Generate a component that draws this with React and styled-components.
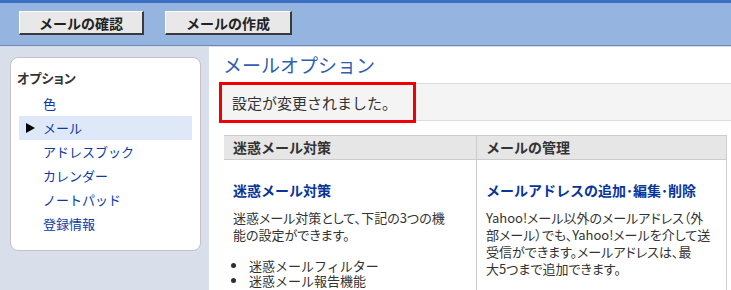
import React from 'react';
import styled, { createGlobalStyle } from 'styled-components';

const GlobalStyle = createGlobalStyle`
  html, body {
    margin: 0;
    padding: 0;
    background: #ffffff;
  }
  body {
    font-family: "Noto Sans CJK JP", "Liberation Sans", sans-serif;
    color: #333333;
  }
`;

const Page = styled.div`
  width: 731px;
  height: 290px;
  overflow: hidden;
  display: flex;
  flex-direction: column;
`;

const TopBar = styled.div`
  flex-shrink: 0;
  box-sizing: border-box;
  height: 46px;
  background: #96b4e0;
  border-top: 3px solid #3b6fc6;
  border-bottom: 1px solid #6d8ab6;
  padding: 8px 0 0 19px;
  display: flex;
  gap: 21px;
  align-items: flex-start;
`;

const BarButton = styled.button`
  box-sizing: border-box;
  width: ${p => p.w}px;
  height: 24px;
  padding: 0;
  background: #e8e8e8;
  border-top: 1px solid #ffffff;
  border-left: 1px solid #ffffff;
  border-right: 2px solid #3a3a3a;
  border-bottom: 2px solid #3a3a3a;
  font-family: "Noto Sans CJK JP", sans-serif;
  font-size: 14px;
  font-weight: 700;
  line-height: 20px;
  color: #222222;
`;

const Body = styled.div`
  flex: 1;
  min-height: 0;
  display: flex;
  border-top: 1px solid #d4dcea;
`;

const Sidebar = styled.div`
  width: 209px;
  flex-shrink: 0;
  background: #d8dfeb;
  padding: 10px 0 0 10px;
  box-sizing: border-box;
`;

const SidePanel = styled.div`
  box-sizing: border-box;
  width: 191px;
  height: 194px;
  background: #ffffff;
  border: 1px solid #c2c2c2;
  border-radius: 8px;
  padding: 12px 8px 0 8px;
`;

const SideTitle = styled.div`
  font-size: 13px;
  font-weight: 700;
  line-height: 16px;
  color: #333333;
  margin: 0 0 6px -2px;
  font-feature-settings: "palt";
`;

const SideList = styled.ul`
  list-style: none;
  margin: 0;
  padding: 0;
`;

const SideItem = styled.li`
  position: relative;
  height: 24px;
  line-height: 24px;
  padding-left: 24px;
  font-size: 13px;
  color: #0b3aa4;
  background: ${p => (p.active ? '#dfe8f8' : 'transparent')};
`;

const Arrow = styled.span`
  position: absolute;
  left: 7px;
  top: 7px;
  width: 0;
  height: 0;
  border-top: 5px solid transparent;
  border-bottom: 5px solid transparent;
  border-left: 9px solid #000000;
`;

const Main = styled.div`
  flex: 1;
  padding: 0 4px 0 10px;
  box-sizing: border-box;
`;

const Title = styled.h1`
  margin: 6px 0 0 4px;
  font-size: 19px;
  font-weight: 400;
  line-height: 24px;
  color: #2f60b0;
`;

const Notice = styled.div`
  box-sizing: border-box;
  margin-top: 6px;
  margin-right: -4px;
  height: 38px;
  background: #f4f4f4;
  border-top: 1px solid #dddddd;
  border-bottom: 1px solid #dddddd;
  display: flex;
  align-items: flex-start;
`;

const NoticeBox = styled.div`
  box-sizing: border-box;
  margin-top: -2px;
  width: 197px;
  height: 41px;
  border: 3px solid #f00000;
  padding-left: 10px;
  font-size: 15px;
  line-height: 35px;
  color: #333333;
`;

const Table = styled.div`
  margin: 14px 0 0 5px;
  width: 503px;
  display: grid;
  grid-template-columns: 253px 250px;
  border-top: 1px solid #cccccc;
`;

const Column = styled.div`
  box-sizing: border-box;
  border-right: 1px solid #cccccc;
`;

const HeadCell = styled.div`
  height: 23px;
  line-height: 23px;
  background: #e6e6e6;
  border-bottom: 1px solid #cccccc;
  padding-left: 9px;
  font-size: 14px;
  font-weight: 700;
  color: #333333;
`;

const Cell = styled.div`
  padding: 20px 9px 0 9px;
  height: 140px;
`;

const CellHeading = styled.a`
  display: block;
  font-size: 14px;
  font-weight: 700;
  line-height: 20px;
  color: #0a3598;
  text-decoration: none;
  margin-bottom: 9px;
  white-space: nowrap;
`;

const Text = styled.p`
  margin: 0;
  font-size: 13px;
  line-height: 17px;
  color: #333333;
  white-space: nowrap;
  font-feature-settings: "palt";
`;

const Bullets = styled.ul`
  list-style: none;
  margin: 15px 0 0 -2px;
  padding: 0;
`;

const Bullet = styled.li`
  position: relative;
  padding-left: 18px;
  font-size: 13px;
  line-height: 15px;
  color: #333333;

  &::before {
    content: '';
    position: absolute;
    left: 0;
    top: 5px;
    width: 5px;
    height: 5px;
    border-radius: 50%;
    background: #3a2a2e;
  }
`;

const menu = ['色', 'メール', 'アドレスブック', 'カレンダー', 'ノートパッド', '登録情報'];

export default function App() {
  return (
    <Page>
      <GlobalStyle />
      <TopBar>
        <BarButton w={125}>メールの確認</BarButton>
        <BarButton w={127}>メールの作成</BarButton>
      </TopBar>
      <Body>
        <Sidebar>
          <SidePanel>
            <SideTitle>オプション</SideTitle>
            <SideList>
              {menu.map(item => (
                <SideItem key={item} active={item === 'メール'}>
                  {item === 'メール' && <Arrow />}
                  {item}
                </SideItem>
              ))}
            </SideList>
          </SidePanel>
        </Sidebar>
        <Main>
          <Title>メールオプション</Title>
          <Notice>
            <NoticeBox>設定が変更されました。</NoticeBox>
          </Notice>
          <Table>
            <Column>
              <HeadCell>迷惑メール対策</HeadCell>
              <Cell>
                <CellHeading>迷惑メール対策</CellHeading>
                <Text>
                  迷惑メール対策として、下記の3つの機<br />能の設定ができます。
                </Text>
                <Bullets>
                  <Bullet>迷惑メールフィルター</Bullet>
                  <Bullet>迷惑メール報告機能</Bullet>
                </Bullets>
              </Cell>
            </Column>
            <Column>
              <HeadCell>メールの管理</HeadCell>
              <Cell>
                <CellHeading>メールアドレスの追加･編集･削除</CellHeading>
                <Text>
                  Yahoo!メール以外のメールアドレス（外<br />
                  部メール）でも、Yahoo!メールを介して送<br />
                  受信ができます。メールアドレスは、最<br />
                  大5つまで追加できます。
                </Text>
              </Cell>
            </Column>
          </Table>
        </Main>
      </Body>
    </Page>
  );
}
